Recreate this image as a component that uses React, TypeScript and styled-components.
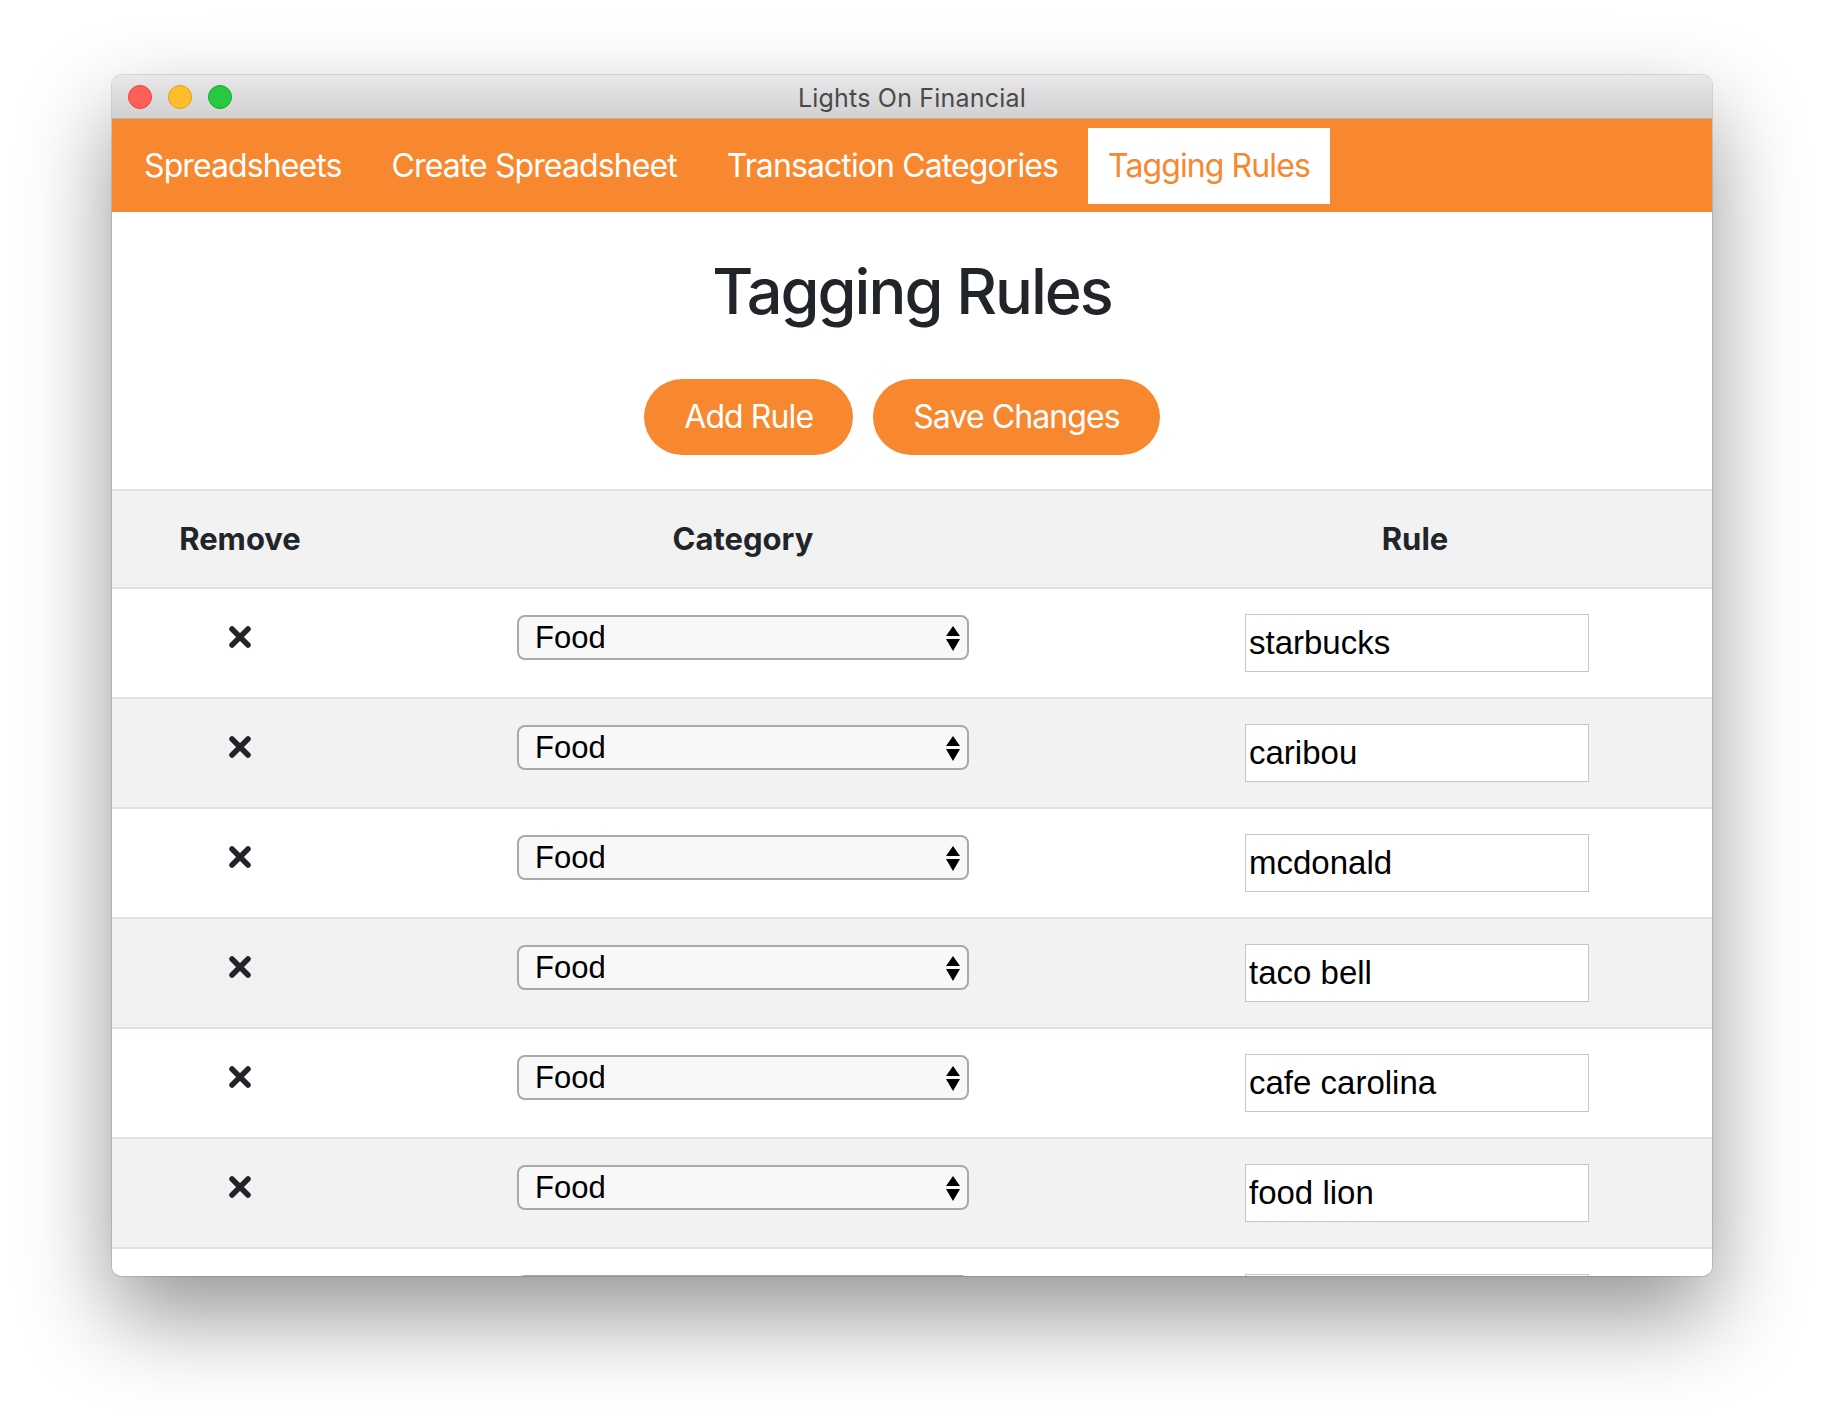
import styled, { createGlobalStyle } from "styled-components";
import { useState } from "react";

const ORANGE = "#f7882f";

const GlobalStyle = createGlobalStyle`
  body {
    margin: 0;
    background: #ffffff;
    font-family: Inter, "Liberation Sans", sans-serif;
  }
`;

const Desktop = styled.div`
  width: 1824px;
  height: 1424px;
  box-sizing: border-box;
  padding: 75px 0 0 112px;
  overflow: hidden;
`;

const Window = styled.div`
  width: 1600px;
  height: 1201px;
  border-radius: 10px;
  overflow: hidden;
  background: #ffffff;
  display: flex;
  flex-direction: column;
  box-shadow: 0 0 0 1px rgba(0, 0, 0, 0.12), 0 40px 90px rgba(0, 0, 0, 0.42);
`;

const TitleBar = styled.div`
  height: 44px;
  box-sizing: border-box;
  padding: 0 16px;
  display: grid;
  grid-template-columns: 1fr auto 1fr;
  align-items: center;
  background: linear-gradient(#e9e7e9, #d2d1d2);
  border-bottom: 1px solid #b4b4b4;
`;

const Lights = styled.div`
  display: flex;
  gap: 16px;
`;

const Light = styled.span<{ $fill: string; $edge: string }>`
  width: 24px;
  height: 24px;
  box-sizing: border-box;
  border-radius: 50%;
  background: ${(p) => p.$fill};
  border: 1px solid ${(p) => p.$edge};
`;

const WindowTitle = styled.div`
  padding-top: 3px;
  font-size: 25px;
  color: #4a4a4a;
  letter-spacing: 0.2px;
`;

const NavBar = styled.nav`
  height: 93px;
  flex-shrink: 0;
  background: ${ORANGE};
  display: flex;
  align-items: center;
  padding: 0 12px;
  gap: 10px;
`;

const NavItem = styled.a<{ $active?: boolean }>`
  height: 76px;
  padding: 0 20px;
  display: flex;
  align-items: center;
  font-size: 32px;
  letter-spacing: -0.9px;
  text-decoration: none;
  cursor: pointer;
  color: ${(p) => (p.$active ? ORANGE : "#ffffff")};
  background: ${(p) => (p.$active ? "#ffffff" : "transparent")};
`;

const Content = styled.main`
  flex: 1;
  overflow: hidden;
`;

const Heading = styled.h1`
  margin: 42px 0 0;
  font-size: 63px;
  font-weight: 500;
  letter-spacing: -2px;
  line-height: 1.2;
  text-align: center;
  color: #212529;
`;

const ButtonRow = styled.div`
  display: flex;
  justify-content: center;
  margin: 49px 0 34px;
`;

const PillButton = styled.button`
  height: 76px;
  padding: 0 40px;
  margin-right: 20px;
  border: 0;
  border-radius: 38px;
  background: ${ORANGE};
  color: #ffffff;
  font-family: inherit;
  font-size: 32px;
  letter-spacing: -0.9px;
  cursor: pointer;
`;

const Columns = `
  display: grid;
  grid-template-columns: 256px 750px 1fr;
`;

const HeaderRow = styled.div`
  ${Columns}
  height: 96px;
  background: #f2f2f2;
  border-top: 2px solid #dee2e6;
  border-bottom: 2px solid #dee2e6;
`;

const HeaderCell = styled.div`
  display: flex;
  align-items: center;
  justify-content: center;
  font-size: 31px;
  font-weight: 700;
  color: #212529;
`;

const Row = styled.div<{ $striped: boolean }>`
  ${Columns}
  height: 108px;
  border-bottom: 2px solid #dee2e6;
  background: ${(p) => (p.$striped ? "#f2f2f2" : "#ffffff")};
`;

const Cell = styled.div`
  display: flex;
  align-items: center;
  justify-content: center;
`;

const RemoveButton = styled.button`
  width: 22px;
  height: 22px;
  padding: 0;
  margin-bottom: 12px;
  border: 0;
  background: none;
  cursor: pointer;
  display: flex;
`;

const SelectWrap = styled.div`
  position: relative;
  margin-bottom: 10px;
`;

const CategorySelect = styled.select`
  width: 452px;
  height: 45px;
  box-sizing: border-box;
  appearance: none;
  border: 2px solid #a9a9a9;
  border-radius: 8px;
  background: #f8f8f8;
  padding: 0 40px 0 16px;
  font-family: "Liberation Sans", Arial, sans-serif;
  font-size: 31px;
  color: #000000;
`;

const Arrows = styled.svg`
  position: absolute;
  right: 9px;
  top: 11px;
  pointer-events: none;
`;

const RuleInput = styled.input`
  width: 344px;
  height: 58px;
  box-sizing: border-box;
  margin-left: 4px;
  border: 1px solid #c6c6c6;
  padding: 0 3px;
  font-family: "Liberation Sans", Arial, sans-serif;
  font-size: 33px;
  color: #000000;
  background: #ffffff;
  outline: none;
`;

const categories = ["Food", "Gas", "Shopping", "Bills", "Entertainment"];

const initialRules = [
  "starbucks",
  "caribou",
  "mcdonald",
  "taco bell",
  "cafe carolina",
  "food lion",
  "harris teeter",
];

function App() {
  const [rules, setRules] = useState(
    initialRules.map((text) => ({ category: "Food", text }))
  );

  const addRule = () => setRules((prev) => [...prev, { category: "Food", text: "" }]);
  const removeRule = (i: number) => setRules((prev) => prev.filter((_, j) => j !== i));

  return (
    <Desktop>
      <GlobalStyle />
      <Window>
        <TitleBar>
          <Lights>
            <Light $fill="#ff5f57" $edge="#e2463f" />
            <Light $fill="#ffbd2e" $edge="#e1a116" />
            <Light $fill="#28c940" $edge="#12ac28" />
          </Lights>
          <WindowTitle>Lights On Financial</WindowTitle>
          <div />
        </TitleBar>
        <NavBar>
          <NavItem>Spreadsheets</NavItem>
          <NavItem>Create Spreadsheet</NavItem>
          <NavItem>Transaction Categories</NavItem>
          <NavItem $active>Tagging Rules</NavItem>
        </NavBar>
        <Content>
          <Heading>Tagging Rules</Heading>
          <ButtonRow>
            <PillButton onClick={addRule}>Add Rule</PillButton>
            <PillButton>Save Changes</PillButton>
          </ButtonRow>
          <HeaderRow>
            <HeaderCell>Remove</HeaderCell>
            <HeaderCell>Category</HeaderCell>
            <HeaderCell>Rule</HeaderCell>
          </HeaderRow>
          {rules.map((rule, i) => (
            <Row key={i} $striped={i % 2 === 1}>
              <Cell>
                <RemoveButton onClick={() => removeRule(i)} aria-label="Remove rule">
                  <svg width="22" height="22" viewBox="0 0 22 22">
                    <path
                      d="M3 3 L19 19 M19 3 L3 19"
                      stroke="#212529"
                      strokeWidth="5.5"
                      strokeLinecap="round"
                    />
                  </svg>
                </RemoveButton>
              </Cell>
              <Cell>
                <SelectWrap>
                  <CategorySelect
                    value={rule.category}
                    onChange={(e) => {
                      const v = e.target.value;
                      setRules((prev) => prev.map((r, j) => (j === i ? { ...r, category: v } : r)));
                    }}
                  >
                    {categories.map((c) => (
                      <option key={c}>{c}</option>
                    ))}
                  </CategorySelect>
                  <Arrows width="14" height="25" viewBox="0 0 14 25">
                    <path d="M0 10 L7 0 L14 10 Z M0 13 L14 13 L7 25 Z" fill="#000" />
                  </Arrows>
                </SelectWrap>
              </Cell>
              <Cell>
                <RuleInput
                  value={rule.text}
                  onChange={(e) => {
                    const v = e.target.value;
                    setRules((prev) => prev.map((r, j) => (j === i ? { ...r, text: v } : r)));
                  }}
                />
              </Cell>
            </Row>
          ))}
        </Content>
      </Window>
    </Desktop>
  );
}

export default App;
